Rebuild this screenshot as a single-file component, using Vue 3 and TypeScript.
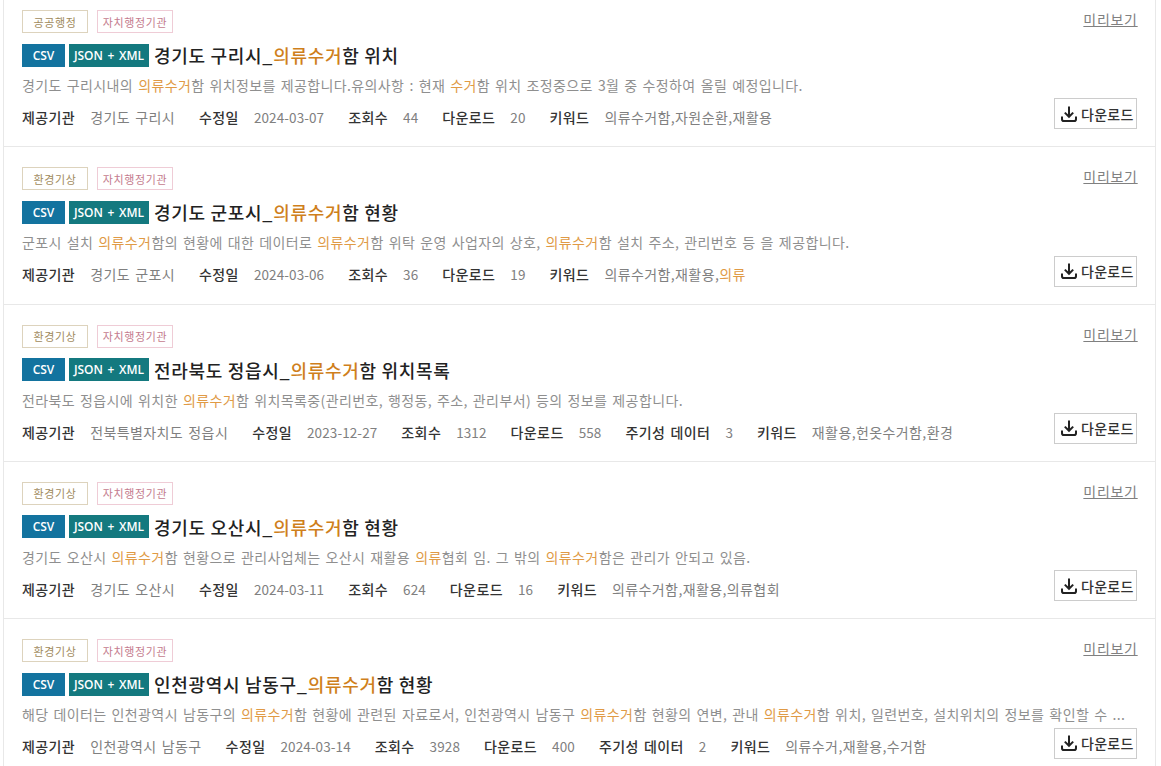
<script setup lang="ts">
interface Seg { t: string; h?: boolean }
interface Meta { k: string; v: Seg[]; num?: boolean }
interface Item { tag: string; title: Seg[]; desc: Seg[]; meta: Meta[] }
const s = (t: string): Seg => ({ t })
const h = (t: string): Seg => ({ t, h: true })
const m = (k: string, v: string): Meta => ({ k, v: [s(v)], num: /^[\d-]+$/.test(v) })
const items: Item[] = [
  {
    tag: '공공행정',
    title: [s('경기도 구리시_'), h('의류수거'), s('함 위치')],
    desc: [s('경기도 구리시내의 '), h('의류수거'), s('함 위치정보를 제공합니다.유의사항 : 현재 '), h('수거'), s('함 위치 조정중으로 3월 중 수정하여 올릴 예정입니다.')],
    meta: [m('제공기관', '경기도 구리시'), m('수정일', '2024-03-07'), m('조회수', '44'), m('다운로드', '20'), m('키워드', '의류수거함,자원순환,재활용')],
  },
  {
    tag: '환경기상',
    title: [s('경기도 군포시_'), h('의류수거'), s('함 현황')],
    desc: [s('군포시 설치 '), h('의류수거'), s('함의 현황에 대한 데이터로 '), h('의류수거'), s('함 위탁 운영 사업자의 상호, '), h('의류수거'), s('함 설치 주소, 관리번호 등 을 제공합니다.')],
    meta: [m('제공기관', '경기도 군포시'), m('수정일', '2024-03-06'), m('조회수', '36'), m('다운로드', '19'), { k: '키워드', v: [s('의류수거함,재활용,'), h('의류')] }],
  },
  {
    tag: '환경기상',
    title: [s('전라북도 정읍시_'), h('의류수거'), s('함 위치목록')],
    desc: [s('전라북도 정읍시에 위치한 '), h('의류수거'), s('함 위치목록중(관리번호, 행정동, 주소, 관리부서) 등의 정보를 제공합니다.')],
    meta: [m('제공기관', '전북특별자치도 정읍시'), m('수정일', '2023-12-27'), m('조회수', '1312'), m('다운로드', '558'), m('주기성 데이터', '3'), m('키워드', '재활용,헌옷수거함,환경')],
  },
  {
    tag: '환경기상',
    title: [s('경기도 오산시_'), h('의류수거'), s('함 현황')],
    desc: [s('경기도 오산시 '), h('의류수거'), s('함 현황으로 관리사업체는 오산시 재활용 '), h('의류'), s('협회 임. 그 밖의 '), h('의류수거'), s('함은 관리가 안되고 있음.')],
    meta: [m('제공기관', '경기도 오산시'), m('수정일', '2024-03-11'), m('조회수', '624'), m('다운로드', '16'), m('키워드', '의류수거함,재활용,의류협회')],
  },
  {
    tag: '환경기상',
    title: [s('인천광역시 남동구_'), h('의류수거'), s('함 현황')],
    desc: [s('해당 데이터는 인천광역시 남동구의 '), h('의류수거'), s('함 현황에 관련된 자료로서, 인천광역시 남동구 '), h('의류수거'), s('함 현황의 연변, 관내 '), h('의류수거'), s('함 위치, 일련번호, 설치위치의 정보를 확인할 수 ...')],
    meta: [m('제공기관', '인천광역시 남동구'), m('수정일', '2024-03-14'), m('조회수', '3928'), m('다운로드', '400'), m('주기성 데이터', '2'), m('키워드', '의류수거,재활용,수거함')],
  },
]
</script>

<template>
  <div class="list">
    <section v-for="(item, i) in items" :key="i" class="row">
      <div class="tags">
        <span class="tag tag-a">{{ item.tag }}</span>
        <span class="tag tag-b">자치행정기관</span>
        <a class="preview">미리보기</a>
      </div>
      <div class="title-line">
        <span class="fmt csv">CSV</span>
        <span class="fmt jx">JSON + XML</span>
        <h3 class="title"><template v-for="(p, j) in item.title" :key="j"><em v-if="p.h" class="hl">{{ p.t }}</em><template v-else>{{ p.t }}</template></template></h3>
      </div>
      <p class="desc"><template v-for="(p, j) in item.desc" :key="j"><em v-if="p.h" class="hl">{{ p.t }}</em><template v-else>{{ p.t }}</template></template></p>
      <div class="bottom">
        <dl class="meta">
          <div v-for="(mt, j) in item.meta" :key="j" class="pair">
            <dt>{{ mt.k }}</dt>
            <dd :class="{ num: mt.num }"><template v-for="(p, n) in mt.v" :key="n"><em v-if="p.h" class="hl">{{ p.t }}</em><template v-else>{{ p.t }}</template></template></dd>
          </div>
        </dl>
        <button class="dl" type="button">
          <svg width="18" height="18" viewBox="0 0 18 18" fill="none" stroke="#222" stroke-width="2">
            <path d="M9 1.5V11.5M4.8 7.6L9 11.8L13.2 7.6" />
            <path d="M2 11.5V14.2C2 15.3 2.7 16 3.8 16H14.2C15.3 16 16 15.3 16 14.2V11.5" />
          </svg>
          <span>다운로드</span>
        </button>
      </div>
    </section>
  </div>
</template>

<style>
html, body { margin: 0; background: #fff; overflow: hidden; }
</style>

<style scoped>
.list {
  box-sizing: border-box;
  width: 1153px;
  height: 776px;
  margin: -10px 0 0 3px;
  border-left: 1px solid #e8e8e8;
  border-right: 1px solid #e8e8e8;
  overflow: hidden;
  font-family: "Noto Sans CJK KR", "Noto Sans", sans-serif;
}
.row {
  box-sizing: border-box;
  height: 157.3px;
  padding: 20px 18px 0;
  border-bottom: 1px solid #e8e8e8;
}
.tags { display: flex; align-items: flex-start; gap: 9px; height: 23px; }
.tag {
  box-sizing: border-box;
  height: 23px;
  display: flex;
  align-items: center;
  justify-content: center;
  font-size: 11px;
  letter-spacing: 0.6px;
  border: 1px solid;
  background: #fff;
}
.tag-a { width: 66px; color: #a08a5c; border-color: #ddd3bd; }
.tag-b { width: 76px; color: #c47b8e; border-color: #efccd6; }
.preview {
  margin-left: auto;
  margin-top: -1px;
  font-size: 14px;
  line-height: 20px;
  color: #808080;
  text-decoration: underline;
  letter-spacing: 0.7px;
  margin-right: -0.7px;
}
.title-line { display: flex; align-items: center; gap: 4px; margin-top: 10px; height: 24px; }
.fmt {
  box-sizing: border-box;
  height: 23px;
  display: flex;
  align-items: center;
  justify-content: center;
  color: #fff;
  font-size: 12px;
  font-family: "Open Sans", "Noto Sans", sans-serif;
  font-weight: 600;
  word-spacing: 1.5px;
}
.csv { width: 43px; background: #13739f; }
.jx { width: 80px; background: #14797f; }
.title {
  margin: 0 0 0 1px;
  font-size: 18px;
  font-weight: 500;
  line-height: 24px;
  color: #222;
  letter-spacing: 0.7px;
  white-space: nowrap;
}
.hl { font-style: normal; color: #e09a45; }
.title .hl { color: #cf7f1c; }
.desc {
  margin: 8px 0 0;
  font-size: 14px;
  line-height: 20px;
  color: #8f8f8f;
  letter-spacing: 0.38px;
  word-spacing: 1.5px;
  white-space: nowrap;
}
.bottom { display: flex; align-items: flex-start; justify-content: space-between; margin-top: 3px; }
.meta { display: flex; margin: 9px 0 0; gap: 24px; font-size: 14px; line-height: 20px; letter-spacing: 0.4px; word-spacing: 1.7px; }
.pair { display: flex; gap: 15px; }
dt { font-weight: 500; color: #333; }
dd { margin: 0; color: #808080; }
dd.num { font-size: 13.5px; letter-spacing: 0.1px; }
.dl {
  box-sizing: border-box;
  width: 83px;
  height: 31px;
  margin-top: 0.4px;
  padding: 0 0 0 5px;
  display: flex;
  align-items: center;
  gap: 3px;
  background: #fff;
  border: 1px solid #ccc;
  font: inherit;
  font-size: 14px;
  letter-spacing: 0.3px;
  font-weight: 500;
  color: #333;
  white-space: nowrap;
}
.dl svg { flex: none; }
</style>
